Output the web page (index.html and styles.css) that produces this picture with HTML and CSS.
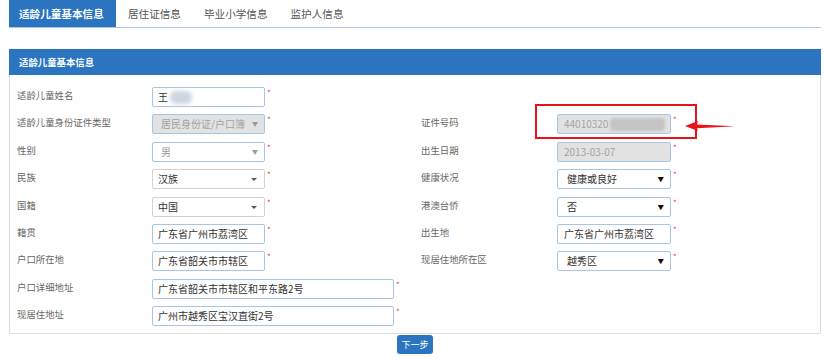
FILE: index.html
```html
<!DOCTYPE html>
<html lang="zh-CN">
<head>
<meta charset="utf-8">
<title>适龄儿童基本信息</title>
<link rel="stylesheet" href="styles.css">
</head>
<body>
<div class="page">
  <ul class="tabs">
    <li class="tab active">适龄儿童基本信息</li>
    <li class="tab">居住证信息</li>
    <li class="tab">毕业小学信息</li>
    <li class="tab">监护人信息</li>
  </ul>

  <div class="panel">
    <div class="panel-head">适龄儿童基本信息</div>
    <div class="panel-body">
      <div class="row">
        <div class="lbl">适龄儿童姓名</div>
        <div class="fld"><div class="ctl">王<span class="blur-name"></span></div><span class="req">*</span></div>
        <div class="lbl r"></div>
        <div class="fld last"></div>
      </div>
      <div class="row">
        <div class="lbl">适龄儿童身份证件类型</div>
        <div class="fld"><div class="ctl dis sel">居民身份证/户口簿<span class="arr light">▼</span></div><span class="req">*</span></div>
        <div class="lbl r">证件号码</div>
        <div class="fld last"><div class="ctl dis r">44010320<span class="blur-id"></span></div><span class="req">*</span></div>
      </div>
      <div class="row">
        <div class="lbl">性别</div>
        <div class="fld"><div class="ctl sel muted">男<span class="arr light">▼</span></div><span class="req">*</span></div>
        <div class="lbl r">出生日期</div>
        <div class="fld last"><div class="ctl dis r">2013-03-07</div><span class="req">*</span></div>
      </div>
      <div class="row">
        <div class="lbl">民族</div>
        <div class="fld"><div class="ctl gray">汉族<span class="caret"></span></div><span class="req">*</span></div>
        <div class="lbl r">健康状况</div>
        <div class="fld last"><div class="ctl r win">健康或良好<span class="arr dark">▼</span></div><span class="req">*</span></div>
      </div>
      <div class="row">
        <div class="lbl">国籍</div>
        <div class="fld"><div class="ctl gray">中国<span class="caret"></span></div><span class="req">*</span></div>
        <div class="lbl r">港澳台侨</div>
        <div class="fld last"><div class="ctl r win">否<span class="arr dark">▼</span></div><span class="req">*</span></div>
      </div>
      <div class="row">
        <div class="lbl">籍贯</div>
        <div class="fld"><div class="ctl">广东省广州市荔湾区</div><span class="req">*</span></div>
        <div class="lbl r">出生地</div>
        <div class="fld last"><div class="ctl r">广东省广州市荔湾区</div><span class="req">*</span></div>
      </div>
      <div class="row">
        <div class="lbl">户口所在地</div>
        <div class="fld"><div class="ctl">广东省韶关市市辖区</div><span class="req">*</span></div>
        <div class="lbl r">现居住地所在区</div>
        <div class="fld last"><div class="ctl r win">越秀区<span class="arr dark">▼</span></div><span class="req">*</span></div>
      </div>
      <div class="row">
        <div class="lbl">户口详细地址</div>
        <div class="fld"><div class="ctl wide">广东省韶关市市辖区和平东路2号</div><span class="req">*</span></div>
        <div class="lbl r"></div>
        <div class="fld last"></div>
      </div>
      <div class="row">
        <div class="lbl">现居住地址</div>
        <div class="fld"><div class="ctl wide">广州市越秀区宝汉直街2号</div><span class="req">*</span></div>
        <div class="lbl r"></div>
        <div class="fld last"></div>
      </div>
    </div>
  </div>

  <div class="actions"><button class="btn">下一步</button></div>

  <div class="mark-box"></div>
  <svg class="mark-arrow" width="56" height="16" viewBox="0 0 56 16">
    <polygon points="2,8 15,3 14,6.4 52,8.2 14,10.2 15,13" fill="#e8141b"/>
  </svg>
</div>
</body>
</html>
```

FILE: styles.css
```css
* { box-sizing: border-box; }
html, body { margin: 0; padding: 0; background: #fff; }
body {
  font-family: "Noto Sans CJK SC", "Noto Sans", "Liberation Sans", sans-serif;
  color: #555;
  width: 824px;
  height: 359px;
  overflow: hidden;
}
.page { position: relative; width: 824px; height: 359px; }

.tabs {
  list-style: none;
  margin: 0 3px 0 9px;
  padding: 0;
  display: flex;
  height: 28px;
  border-bottom: 1px solid #a9c7e6;
}
.tab {
  height: 27px;
  line-height: 27px;
  font-size: 10.6px;
  padding: 0 11.5px;
  color: #555;
}
.tab.active {
  background: #2a74c0;
  color: #fff;
  font-weight: bold;
  padding: 0 10px 0 10px;
  width: 107px;
}
.tab:nth-child(2) { padding-left: 12px; }

.panel {
  margin: 21px 3px 0 9px;
  border: 1px solid #dcdcdc;
  border-top: none;
}
.panel-head {
  height: 26px;
  line-height: 26px;
  background: #2a74c0;
  color: #fff;
  font-weight: bold;
  font-size: 9.4px;
  padding-left: 10px;
  margin: 0 -1px;
}
.panel-body { padding: 12px 0 6.6px 7px; }

.row {
  display: flex;
  height: 20px;
  margin-bottom: 7.4px;
}
.row:last-child { margin-bottom: 0; }
.lbl {
  flex: 0 0 135px;
  font-size: 9.4px;
  line-height: 12px;
  padding-top: 2px;
  color: #666;
}
.lbl.r { flex-basis: 136px; }
.fld {
  flex: 0 0 269px;
  display: flex;
  align-items: flex-start;
}
.fld.last { flex: 1 1 auto; }

.ctl {
  position: relative;
  flex: none;
  width: 113px;
  height: 20px;
  border: 1px solid #a9c5e6;
  border-radius: 2px;
  font-size: 10px;
  line-height: 18px;
  padding-left: 5px;
  color: #333;
  background: #fff;
  white-space: nowrap;
  display: flex;
  align-items: center;
}
.ctl.r { width: 114px; padding-left: 6px; }
.ctl.win { padding-left: 9px; }
.ctl.wide { width: 242px; }
.ctl.sel { padding-left: 8px; }
.ctl.dis { background: #e2e2e2; color: #a3a3a3; }
.ctl.muted { color: #999; }
.ctl.gray { border-color: #d2d2d2; }

.arr {
  position: absolute;
  right: 6px;
  top: 0;
  line-height: 18px;
}
.arr.light { font-size: 6px; color: #9a9a9a; }
.arr.dark { font-size: 6.5px; color: #111; right: 6px; }
.caret {
  position: absolute;
  right: 7px;
  top: 8px;
  width: 0;
  height: 0;
  border-left: 3px solid transparent;
  border-right: 3px solid transparent;
  border-top: 3px solid #555;
}

.req {
  color: #e53b3b;
  font-size: 8px;
  line-height: 8px;
  margin-left: 2px;
  margin-top: 2px;
}

.blur-name {
  display: inline-block;
  width: 22px;
  height: 13px;
  margin-left: 2px;
  border-radius: 6px;
  background: #cdd5de;
  filter: blur(2px);
}
.blur-id {
  display: inline-block;
  width: 55px;
  height: 13px;
  margin-left: 2px;
  border-radius: 4px;
  background: #c4c4c4;
  filter: blur(1.5px);
}

.actions {
  display: flex;
  justify-content: center;
  padding-left: 6px;
  margin-top: 1px;
}
.btn {
  width: 36px;
  height: 19px;
  border: none;
  border-radius: 3px;
  background: #2a74c0;
  color: #fff;
  font-family: inherit;
  font-size: 9px;
  padding: 0;
}

.mark-box {
  position: absolute;
  left: 535px;
  top: 104px;
  width: 162px;
  height: 35px;
  border: 2px solid #e3141b;
}
.mark-arrow {
  position: absolute;
  left: 683px;
  top: 118px;
}
```
